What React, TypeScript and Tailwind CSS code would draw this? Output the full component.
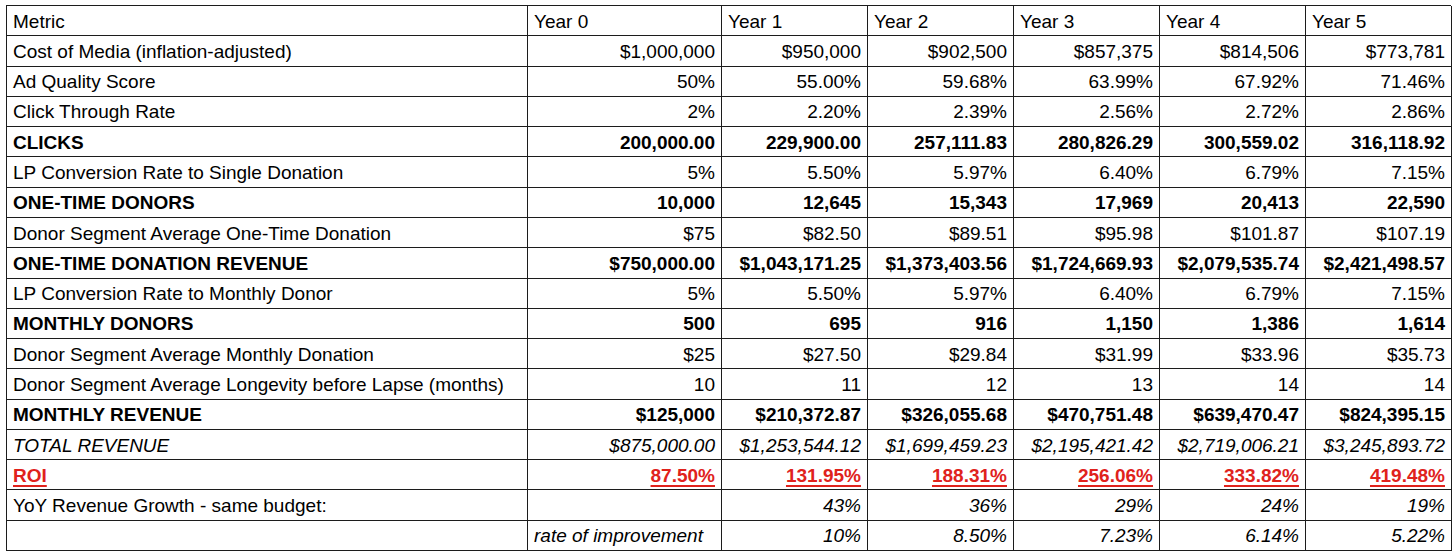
type Cell = string;

type Row = {
  label: string;
  values: Cell[];
  style?: 'bold' | 'italic' | 'roi';
};

const YEARS = ['Year 0', 'Year 1', 'Year 2', 'Year 3', 'Year 4', 'Year 5'];

const ROWS: Row[] = [
  { label: 'Cost of Media (inflation-adjusted)', values: ['$1,000,000', '$950,000', '$902,500', '$857,375', '$814,506', '$773,781'] },
  { label: 'Ad Quality Score', values: ['50%', '55.00%', '59.68%', '63.99%', '67.92%', '71.46%'] },
  { label: 'Click Through Rate', values: ['2%', '2.20%', '2.39%', '2.56%', '2.72%', '2.86%'] },
  { label: 'CLICKS', style: 'bold', values: ['200,000.00', '229,900.00', '257,111.83', '280,826.29', '300,559.02', '316,118.92'] },
  { label: 'LP Conversion Rate to Single Donation', values: ['5%', '5.50%', '5.97%', '6.40%', '6.79%', '7.15%'] },
  { label: 'ONE-TIME DONORS', style: 'bold', values: ['10,000', '12,645', '15,343', '17,969', '20,413', '22,590'] },
  { label: 'Donor Segment Average One-Time Donation', values: ['$75', '$82.50', '$89.51', '$95.98', '$101.87', '$107.19'] },
  { label: 'ONE-TIME DONATION REVENUE', style: 'bold', values: ['$750,000.00', '$1,043,171.25', '$1,373,403.56', '$1,724,669.93', '$2,079,535.74', '$2,421,498.57'] },
  { label: 'LP Conversion Rate to Monthly Donor', values: ['5%', '5.50%', '5.97%', '6.40%', '6.79%', '7.15%'] },
  { label: 'MONTHLY DONORS', style: 'bold', values: ['500', '695', '916', '1,150', '1,386', '1,614'] },
  { label: 'Donor Segment Average Monthly Donation', values: ['$25', '$27.50', '$29.84', '$31.99', '$33.96', '$35.73'] },
  { label: 'Donor Segment Average Longevity before Lapse (months)', values: ['10', '11', '12', '13', '14', '14'] },
  { label: 'MONTHLY REVENUE', style: 'bold', values: ['$125,000', '$210,372.87', '$326,055.68', '$470,751.48', '$639,470.47', '$824,395.15'] },
  { label: 'TOTAL REVENUE', style: 'italic', values: ['$875,000.00', '$1,253,544.12', '$1,699,459.23', '$2,195,421.42', '$2,719,006.21', '$3,245,893.72'] },
  { label: 'ROI', style: 'roi', values: ['87.50%', '131.95%', '188.31%', '256.06%', '333.82%', '419.48%'] },
];

const rowText = (style?: Row['style']) => {
  if (style === 'bold') return 'font-bold text-black';
  if (style === 'italic') return 'italic text-black';
  if (style === 'roi') return 'font-bold text-[#e0221c] underline underline-offset-[3px] decoration-2';
  return 'text-black';
};

const cell = 'flex items-center border-r border-b border-[#1c1c1c] px-[6px] pt-[1px] whitespace-nowrap';

export default function App() {
  return (
    <div className="w-[1456px] h-[558px] bg-white pl-[6px] pt-[5px] font-['Liberation_Sans',Arial,sans-serif] text-[19px] leading-none text-black">
      <div className="grid h-[546px] w-[1445px] grid-cols-[521px_194px_146px_146px_146px_146px_146px] grid-rows-[repeat(18,1fr)] border-l border-t border-[#1c1c1c]">
        <div className={cell}>Metric</div>
        {YEARS.map((y) => (
          <div key={y} className={cell}>
            {y}
          </div>
        ))}

        {ROWS.map((row) => (
          <div key={row.label} className="contents">
            <div className={`${cell} ${rowText(row.style)}`}>{row.label}</div>
            {row.values.map((v, i) => (
              <div key={i} className={`${cell} justify-end ${rowText(row.style)}`}>
                {v}
              </div>
            ))}
          </div>
        ))}

        <div className={cell}>YoY Revenue Growth - same budget:</div>
        <div className={cell}></div>
        {['43%', '36%', '29%', '24%', '19%'].map((v, i) => (
          <div key={i} className={`${cell} justify-end italic`}>
            {v}
          </div>
        ))}

        <div className={cell}></div>
        <div className={`${cell} italic`}>rate of improvement</div>
        {['10%', '8.50%', '7.23%', '6.14%', '5.22%'].map((v, i) => (
          <div key={i} className={`${cell} justify-end italic`}>
            {v}
          </div>
        ))}
      </div>
    </div>
  );
}
